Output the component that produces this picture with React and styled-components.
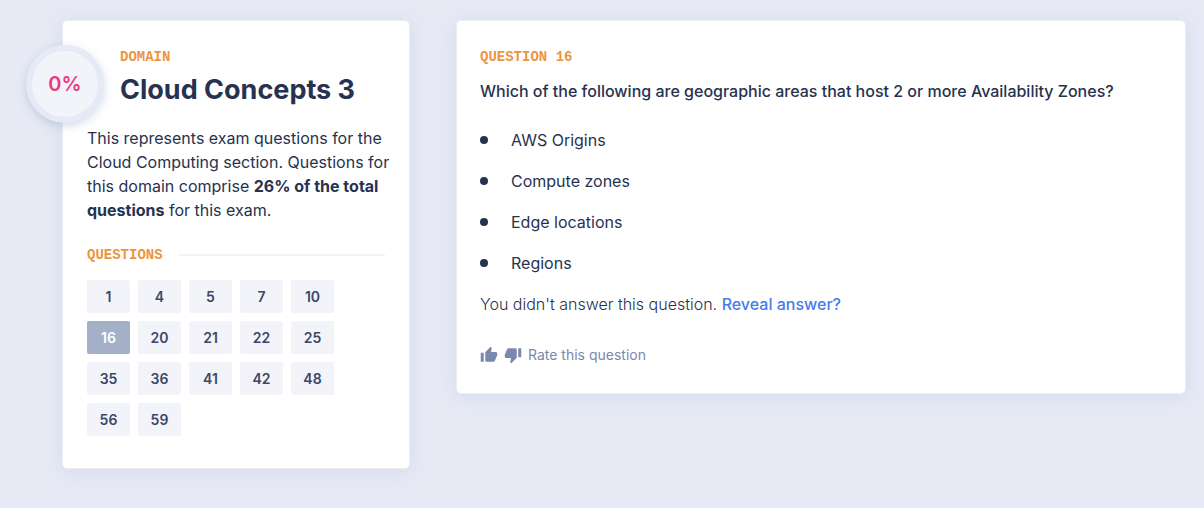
import React from "react";
import styled, { createGlobalStyle } from "styled-components";
import { MdThumbDown, MdThumbUp } from "react-icons/md";

const GlobalStyle = createGlobalStyle`
  *, *::before, *::after { box-sizing: border-box; }
  body {
    margin: 0;
    background: #e7eaf5;
    color: #273250;
    font-family: Inter, "Liberation Sans", sans-serif;
    font-size: 16px;
    line-height: 24px;
  }
  h1, h2, h3, p, ul { margin: 0; padding: 0; }
`;

const Page = styled.main`
  display: grid;
  grid-template-columns: 348px minmax(0, 1fr);
  align-items: start;
  gap: 46px;
  min-height: 100vh;
  padding: 20px 18px 20px 62px;
`;

const Card = styled.section`
  position: relative;
  padding: 24px;
  background: #fff;
  border: 1px solid #ebedf0;
  border-radius: 5px;
  box-shadow: 0 2px 20px rgba(150, 170, 210, 0.24);
`;

const DomainCard = styled(Card)`
  padding: 24px 20px 32px 24px;
`;

const QuestionCard = styled(Card)`
  padding: 24px 24px 26px 23px;
`;

const Score = styled.div`
  position: absolute;
  top: 24px;
  left: -37px;
  display: flex;
  align-items: center;
  justify-content: center;
  width: 78px;
  height: 78px;
  border: 6px solid #e6eaf6;
  border-radius: 50%;
  background: #f3f4f9;
  color: #ea3a7d;
  font-size: 20px;
  font-weight: 600;
  box-shadow: 0 3px 10px rgba(110, 130, 180, 0.3);
`;

const Eyebrow = styled.h3`
  color: #ed9440;
  font-family: "Courier New", "Liberation Mono", monospace;
  font-size: 14px;
  font-weight: 700;
  line-height: 24px;
  text-transform: uppercase;
`;

const DomainHeading = styled.header`
  padding-left: 33px;
`;

const Title = styled.h1`
  font-size: 27px;
  font-weight: 700;
  line-height: 42px;
`;

const Description = styled.p`
  margin-top: 15px;
  margin-right: -4px;
`;

const SectionHeading = styled.div`
  display: flex;
  align-items: center;
  gap: 16px;
  margin-top: 21px;
  padding-right: 4px;

  &::after {
    content: "";
    flex: 1;
    height: 2px;
    background: #f2f3f8;
  }
`;

const QuestionGrid = styled.nav`
  display: flex;
  flex-wrap: wrap;
  gap: 8px;
  max-width: 248px;
  margin-top: 13px;
`;

const QuestionButton = styled.button`
  width: 43px;
  height: 33px;
  padding: 0;
  border: 0;
  border-radius: 2px;
  background: ${({ $active }) => ($active ? "#a4afc8" : "#f3f4f9")};
  color: ${({ $active }) => ($active ? "#fff" : "#3c4767")};
  font: 600 14px/20px Inter, "Liberation Sans", sans-serif;
  cursor: pointer;
`;

const Prompt = styled.h2`
  margin-top: 10px;
  font-size: 16px;
  font-weight: 500;
  line-height: 24px;
`;

const Options = styled.ul`
  display: flex;
  flex-direction: column;
  gap: 17px;
  margin-top: 25px;
  list-style: none;
`;

const Option = styled.li`
  display: flex;
  align-items: center;
  gap: 23px;

  &::before {
    content: "";
    width: 8px;
    height: 8px;
    border-radius: 50%;
    background: #273250;
  }
`;

const Status = styled.p`
  margin-top: 17px;
  font-weight: 300;
`;

const RevealLink = styled.a`
  color: #4a7bea;
  font-weight: 500;
  text-decoration: none;
`;

const Rating = styled.div`
  display: flex;
  align-items: center;
  gap: 6px;
  margin-top: 27px;
  color: #7b88ad;
  font-size: 14px;
`;

const RateButton = styled.button`
  display: flex;
  padding: 0;
  border: 0;
  background: none;
  color: inherit;
  cursor: pointer;
`;

const questions = [1, 4, 5, 7, 10, 16, 20, 21, 22, 25, 35, 36, 41, 42, 48, 56, 59];
const options = ["AWS Origins", "Compute zones", "Edge locations", "Regions"];
const current = 16;

export default function App() {
  return (
    <>
      <GlobalStyle />
      <Page>
        <DomainCard>
          <Score>0%</Score>
          <DomainHeading>
            <Eyebrow as="p">Domain</Eyebrow>
            <Title>Cloud Concepts 3</Title>
          </DomainHeading>
          <Description>
            This represents exam questions for the Cloud Computing section. Questions for this
            domain comprise <strong>26% of the total questions</strong> for this exam.
          </Description>
          <SectionHeading>
            <Eyebrow>Questions</Eyebrow>
          </SectionHeading>
          <QuestionGrid aria-label="Questions">
            {questions.map((number) => (
              <QuestionButton
                key={number}
                type="button"
                $active={number === current}
                aria-current={number === current ? "true" : undefined}
              >
                {number}
              </QuestionButton>
            ))}
          </QuestionGrid>
        </DomainCard>
        <QuestionCard>
          <Eyebrow>Question {current}</Eyebrow>
          <Prompt>
            Which of the following are geographic areas that host 2 or more Availability Zones?
          </Prompt>
          <Options>
            {options.map((option) => (
              <Option key={option}>{option}</Option>
            ))}
          </Options>
          <Status>
            You didn't answer this question. <RevealLink href="#answer">Reveal answer?</RevealLink>
          </Status>
          <Rating>
            <RateButton type="button" aria-label="Thumbs up">
              <MdThumbUp size={18} />
            </RateButton>
            <RateButton type="button" aria-label="Thumbs down">
              <MdThumbDown size={18} />
            </RateButton>
            <span>Rate this question</span>
          </Rating>
        </QuestionCard>
      </Page>
    </>
  );
}
